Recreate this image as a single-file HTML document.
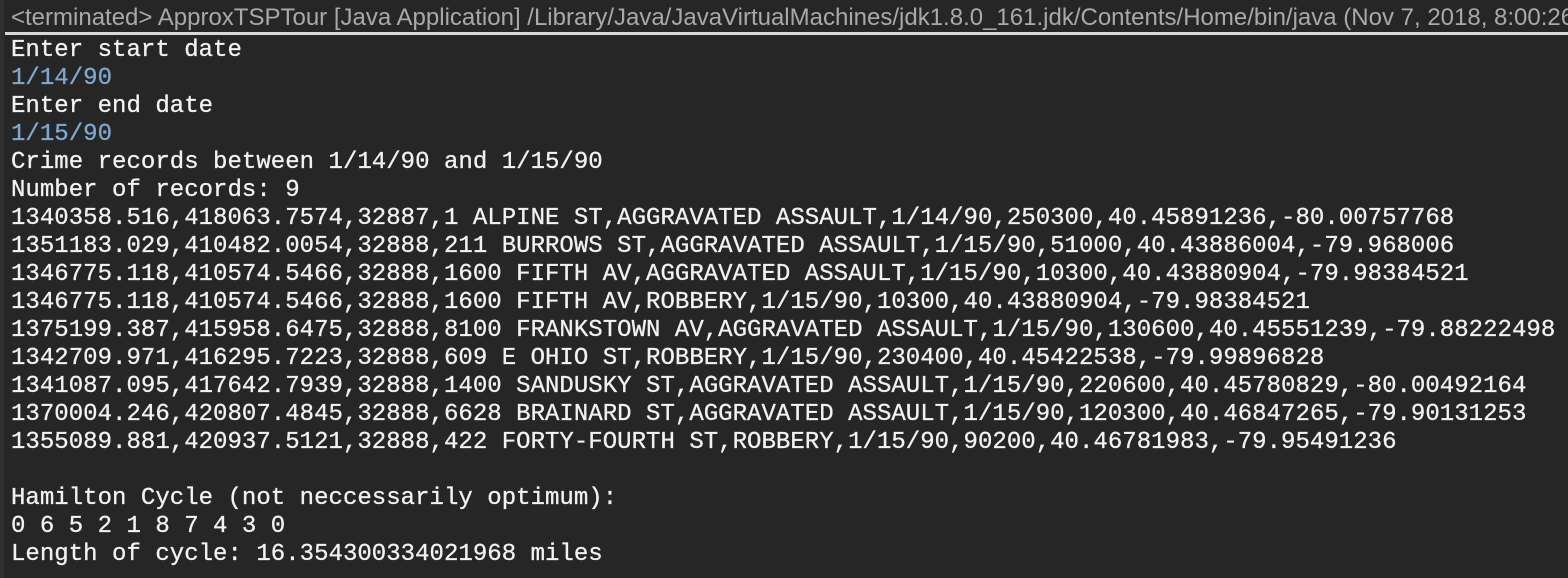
<!DOCTYPE html>
<html><head><meta charset="utf-8"><style>
html,body{margin:0;padding:0;background:#262626;width:1568px;height:578px;overflow:hidden}
.hdr{position:absolute;left:0;top:0;width:1568px;height:33px;background:#262626;color:#a9a9a9;font-family:"Liberation Sans",sans-serif;font-size:24px;line-height:35px;padding-left:11px;white-space:nowrap;overflow:hidden;box-sizing:border-box}
.line{position:absolute;left:5px;top:32px;width:1563px;height:3px;background:#d8d8d8}
.lb{position:absolute;left:0;top:0;width:4px;height:578px;background:#303030}
pre{position:absolute;left:11px;top:37px;margin:0;font-family:"Liberation Mono",monospace;font-size:24px;letter-spacing:0.03px;line-height:28px;color:#f2f2f2;white-space:pre;-webkit-text-stroke:0.3px #f2f2f2}
.in{color:#7fa7cf;-webkit-text-stroke:0.3px #7fa7cf}
</style></head><body>
<div class="hdr">&lt;terminated&gt; ApproxTSPTour [Java Application] /Library/Java/JavaVirtualMachines/jdk1.8.0_161.jdk/Contents/Home/bin/java (Nov 7, 2018, 8:00:26 PM)</div>
<div class="line"></div>
<div class="lb"></div>
<pre>Enter start date
<span class="in">1/14/90</span>
Enter end date
<span class="in">1/15/90</span>
Crime records between 1/14/90 and 1/15/90
Number of records: 9
1340358.516,418063.7574,32887,1 ALPINE ST,AGGRAVATED ASSAULT,1/14/90,250300,40.45891236,-80.00757768
1351183.029,410482.0054,32888,211 BURROWS ST,AGGRAVATED ASSAULT,1/15/90,51000,40.43886004,-79.968006
1346775.118,410574.5466,32888,1600 FIFTH AV,AGGRAVATED ASSAULT,1/15/90,10300,40.43880904,-79.98384521
1346775.118,410574.5466,32888,1600 FIFTH AV,ROBBERY,1/15/90,10300,40.43880904,-79.98384521
1375199.387,415958.6475,32888,8100 FRANKSTOWN AV,AGGRAVATED ASSAULT,1/15/90,130600,40.45551239,-79.88222498
1342709.971,416295.7223,32888,609 E OHIO ST,ROBBERY,1/15/90,230400,40.45422538,-79.99896828
1341087.095,417642.7939,32888,1400 SANDUSKY ST,AGGRAVATED ASSAULT,1/15/90,220600,40.45780829,-80.00492164
1370004.246,420807.4845,32888,6628 BRAINARD ST,AGGRAVATED ASSAULT,1/15/90,120300,40.46847265,-79.90131253
1355089.881,420937.5121,32888,422 FORTY-FOURTH ST,ROBBERY,1/15/90,90200,40.46781983,-79.95491236

Hamilton Cycle (not neccessarily optimum):
0 6 5 2 1 8 7 4 3 0
Length of cycle: 16.354300334021968 miles</pre>
</body></html>
